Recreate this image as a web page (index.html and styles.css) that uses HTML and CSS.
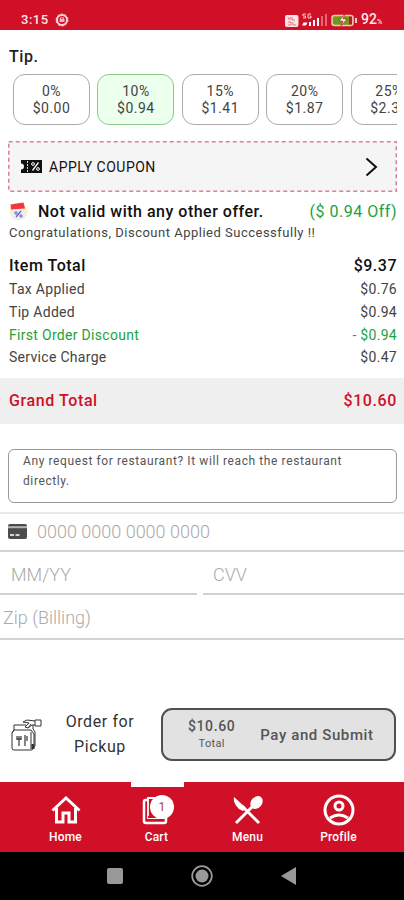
FILE: index.html
```html
<!DOCTYPE html>
<html lang="en">
<head>
<meta charset="utf-8">
<title>Checkout</title>
<link rel="stylesheet" href="styles.css">
</head>
<body>
<header class="status">
  <span class="clock">3:15</span>
  <svg class="status-app" width="14" height="14" viewBox="0 0 14 14"><circle cx="7" cy="7" r="5" fill="none" stroke="#fbd5d8" stroke-width="2"/><circle cx="7" cy="7" r="6" fill="none" stroke="#fbd5d8" stroke-width="1" stroke-dasharray="2 1.77"/><path d="M4.5 6h5v3h-5z" fill="#f6b5bb"/><path d="M5.5 6V4.8h3V6" fill="none" stroke="#f6b5bb"/></svg>
  <svg class="status-icons" width="75" height="16" viewBox="0 0 75 16">
    <rect x="0" y="3" width="13.500" height="12" rx="2" fill="#fce4e6"/>
    <path d="M3 5l1.500 3L6 5M7 5v3h3M3 10h3v3H3M8 10v3h3" fill="none" stroke="#df7480"/>
    <path d="M21 2h-3v2h2.500v2H18M26 2h-3v4h3V4h-1.500" fill="none" stroke="#f8c9cd"/>
    <path d="M17 13.500l1.500-3h4L21 13.500zM24 10h2v4h-2zM28 8h2v6h-2zM32 6h2v8h-2z" fill="#fff"/>
    <path d="M36 4h2v10h-2zM40 2h2v12h-2z" fill="#e46773"/>
    <rect x="47" y="3.500" width="21" height="10" rx="2.500" fill="#6f9b18" stroke="#f7c8c3" stroke-width="1.500"/>
    <path d="M70 6h2v5h-2z" fill="#f7c8c3"/><path d="M64 4.500h3v8h-3z" fill="#cf1027"/>
    <path d="M60 2l-6 7h4l-2 5 6-7h-4z" fill="#fff" stroke="#cf1027" stroke-width=".7"/>
  </svg>
  <span class="battery">92<small>%</small></span>
</header>

<main>
  <h2 class="tip-title">Tip.</h2>
  <div class="tips">
    <button class="tip">0%<br>$0.00</button>
    <button class="tip selected">10%<br>$0.94</button>
    <button class="tip">15%<br>$1.41</button>
    <button class="tip">20%<br>$1.87</button>
    <button class="tip">25%<br>$2.34</button>
  </div>

  <div class="coupon">
    <svg class="coupon-edge" width="389" height="51"><rect x=".75" y=".75" width="387.500" height="49.500" fill="#f5f5f5" stroke="#dd8093" stroke-width="1.500" stroke-dasharray="4 3"/></svg>
    <svg class="ticket" width="21" height="13" viewBox="0 0 21 13"><path d="M0 0h21v13H0V9.500a3 3 0 0 0 0-6z" fill="#111"/><path d="M6.500 1v11" stroke="#ddd" stroke-dasharray="2 1"/><path d="M11.500 10.500l6-8" stroke="#fff" stroke-width="1.300"/><circle cx="12" cy="4" r="1.400" fill="none" stroke="#fff"/><circle cx="17" cy="9" r="1.400" fill="none" stroke="#fff"/></svg>
    <span class="coupon-text">APPLY COUPON</span>
    <svg class="chevron" width="13" height="20" viewBox="0 0 13 20"><path d="M1.500 1.500l9.500 8.500-9.500 8.500" fill="none" stroke="#111" stroke-width="2"/></svg>
  </div>

  <div class="offer">
    <svg width="19" height="19" viewBox="0 0 19 19"><circle cx="9.500" cy="9.500" r="9" fill="#fff0ad"/><path d="M3 7h13v10H3z" fill="#eeeefb"/><path d="M1.500 2.500L14.500.5l1.500 6-14 1z" fill="#f0383e"/><path d="M7 15l5-6" stroke="#6864a4" stroke-width="1.200"/><circle cx="7" cy="11" r="1.200" fill="none" stroke="#6864a4"/><circle cx="12" cy="14" r="1.200" fill="none" stroke="#6864a4"/></svg>
    <span class="offer-name">Not valid with any other offer.</span>
    <span class="offer-off">($ 0.94 Off)</span>
  </div>
  <p class="congrats">Congratulations, Discount Applied Successfully !!</p>

  <div class="bill">
    <div class="line total"><span>Item Total</span><span>$9.37</span></div>
    <div class="line"><span>Tax Applied</span><span>$0.76</span></div>
    <div class="line"><span>Tip Added</span><span>$0.94</span></div>
    <div class="line discount"><span>First Order Discount</span><span>- $0.94</span></div>
    <div class="line"><span>Service Charge</span><span>$0.47</span></div>
  </div>
  <div class="grand"><span>Grand Total</span><span>$10.60</span></div>

  <div class="request">Any request for restaurant? It will reach the restaurant directly.</div>

  <div class="card-form">
    <div class="field number">
      <svg width="19" height="15" viewBox="0 0 19 15"><rect width="19" height="15" rx="2" fill="#4c4c4c"/><path d="M0 3.200h19" stroke="#b5b5b5" stroke-width="2"/><path d="M2 11h4M7.500 11h4" stroke="#fff" stroke-width="1.400"/></svg>
      <span class="number-text">0000 0000 0000 0000</span>
    </div>
    <div class="pair">
      <div class="field expiry">MM/YY</div>
      <div class="field cvv">CVV</div>
    </div>
    <div class="field zip">Zip (Billing)</div>
  </div>
</main>

<section class="checkout">
  <svg class="bag" width="31" height="33" viewBox="0 0 31 33"><g fill="none" stroke="#333" stroke-width="1"><path d="M3 7v5l-2 3v15q0 2 2 2h18l3-4V14l-2-3V7M3 7h12M3 12h17l3 4v15M1 15l2-3M20 14v17"/><path d="M24 2h6v6h-6zM24 3l-8-1-4 2 6 1-4 4 3 1 4-3 3 0M17 10l3-4"/></g><path d="M6 18v4M8 18v4M10 18v4M6 21h4M8 21v7M14 17v11M16 18v5" stroke="#444" stroke-width="1.300"/><path d="M20.500 26h2.500v5h-2.500z" fill="#333"/></svg>
  <p class="pickup">Order for<br>Pickup</p>
  <button class="pay">
    <span class="amount"><b>$10.60</b><small>Total</small></span>
    <span class="pay-label">Pay and Submit</span>
  </button>
</section>

<nav class="tabs">
  <a class="tab home">
    <svg width="32" height="32" viewBox="0 0 32 32"><path d="M2.500 16.500L16 4l13.500 12.500M6.500 14v14h6.500v-9h6v9h6.500V14" fill="none" stroke="#fff" stroke-width="3"/></svg><span>Home</span>
  </a>
  <a class="tab active">
    <svg width="32" height="32" viewBox="0 0 32 32"><path d="M7 6H4.500Q3 6 3 8v19q0 2 2 2h18q2 0 2-2v-4" fill="none" stroke="#fff" stroke-width="2.500"/><path d="M7 4h16v20H7z" fill="none" stroke="#fff" stroke-width="1.800"/><path d="M7 23h17" stroke="#cf1027" stroke-width="2"/></svg><i class="badge">1</i><span>Cart</span>
  </a>
  <a class="tab menu">
    <svg width="32" height="32" viewBox="0 0 32 32"><path d="M2 3c-1 5 2 9 5 12l4 2 3-3z" fill="#fff"/><path d="M10 12l17 17M4 29l18-18" fill="none" stroke="#fff" stroke-width="3"/><ellipse cx="24.500" cy="8.500" rx="5.500" ry="7" transform="rotate(42 24.500 8.500)" fill="#fff"/></svg><span>Menu</span>
  </a>
  <a class="tab profile">
    <svg width="32" height="32" viewBox="0 0 32 32"><circle cx="16" cy="16" r="14" fill="none" stroke="#fff" stroke-width="3"/><circle cx="16" cy="12" r="4" fill="none" stroke="#fff" stroke-width="3"/><path d="M7 24q9-6 18 0" fill="none" stroke="#fff" stroke-width="3"/></svg><span>Profile</span>
  </a>
</nav>
<footer class="system">
  <svg width="16" height="16"><rect width="16" height="16" rx="2" fill="#999"/></svg>
  <svg width="22" height="22"><circle cx="11" cy="11" r="9.800" fill="none" stroke="#999" stroke-width="1.800"/><circle cx="11" cy="11" r="6.500" fill="#999"/></svg>
  <svg width="15" height="18"><path d="M15 0v18L0 9z" fill="#999"/></svg>
</footer>
</body>
</html>
```
FILE: styles.css
```css
* { box-sizing: border-box; }
body { margin: 0; width: 404px; height: 900px; overflow: hidden; display: flex; flex-direction: column; background: #fff; color: #222; font-family: Roboto, sans-serif; }
h2, p { margin: 0; }
button { font-family: inherit; padding: 0; }
svg { flex: none; display: block; }
span { white-space: nowrap; }

.status { height: 30px; background: #cf1027; color: #ffe6e8; display: flex; align-items: center; padding: 10px 21px 0; font-size: 13px; font-weight: 500; line-height: 20px; }
.clock { width: 27px; letter-spacing: .5px; }
.status-app { margin-left: 7px; }
.status-icons { margin-left: 216px; }
.battery { margin-left: 1px; font-size: 14px; }
.battery small { font-size: 7px; }

main { height: 670px; }
.tip-title { padding-left: 9px; margin-top: 17px; font-size: 16px; line-height: 20px; font-weight: 500; letter-spacing: .6px; }
.tips { margin: 7px 7px 0 13px; height: 51px; display: flex; gap: 7.400px; overflow: hidden; }
.tip { flex: none; width: 77px; height: 51px; border: 1px solid #aaa; border-radius: 12px; background: #fff; color: #444; font-size: 14px; line-height: 17px; letter-spacing: .5px; }
.tip.selected { background: #edffed; border-color: #89c98c; }

.coupon { position: relative; margin: 16px 7px 0 8px; height: 51px; display: flex; align-items: center; padding: 0 19px 0 13px; }
.coupon-edge { position: absolute; left: 0; top: 0; }
.ticket, .coupon-text, .chevron { position: relative; }
.coupon-text { margin-left: 7px; font-size: 14px; letter-spacing: .5px; font-weight: 400; color: #111; }
.chevron { margin-left: auto; }

.offer { height: 22px; margin-top: 8px; padding: 0 7px 0 9px; display: flex; align-items: center; font-size: 16px; }
.offer-name { margin-left: 10px; font-weight: 500; letter-spacing: .5px; color: #111; }
.offer-off { margin-left: auto; color: #22a33a; letter-spacing: .5px; }
.congrats { padding-left: 9px; height: 22px; line-height: 22px; font-size: 13px; letter-spacing: .5px; color: #444; white-space: nowrap; }

.bill { margin-top: 9px; padding: 0 7px 0 9px; }
.line { height: 22.700px; display: flex; justify-content: space-between; align-items: center; font-size: 14px; letter-spacing: .3px; color: #444; }
.line.total { height: 25px; font-size: 16px; font-weight: 500; letter-spacing: .5px; color: #111; }
.line.discount { color: #22a33a; }
.grand { margin-top: 9px; height: 46px; padding: 0 7px 0 9px; background: #efefef; color: #cf1027; display: flex; justify-content: space-between; align-items: center; font-size: 16px; font-weight: 500; letter-spacing: .6px; }

.request { margin: 25px 7px 0 8px; height: 54px; border: 1px solid #999; border-radius: 6px; padding: 1px 30px 0 14px; font-size: 12px; line-height: 20.500px; letter-spacing: .6px; color: #555; }

.card-form { margin-top: 9px; border-top: 2px solid #e8e8e8; color: #aaa; font-size: 18px; font-weight: 300; }
.field { display: flex; align-items: center; border-bottom: 2px solid #d2d2d2; }
.number { height: 38px; padding-left: 8px; }
.number-text { margin-left: 10px; }
.pair { display: flex; gap: 6px; height: 43px; }
.expiry { width: 197px; padding: 4px 0 0 11px; }
.cvv { flex: 1; padding: 4px 0 0 10px; }
.zip { height: 45px; padding: 3px 0 0 3px; }

.checkout { height: 82px; display: flex; align-items: flex-start; padding: 8px 8px 0 11px; }
.bag { margin-top: 10px; }
.pickup { width: 116px; text-align: center; font-size: 16px; line-height: 25px; letter-spacing: .6px; margin-top: 1px; color: #333; }
.pay { margin-left: 3px; width: 235px; height: 53px; border: 2px solid #505050; border-radius: 11px; background: #e2e2e2; color: #555; display: flex; align-items: center; padding-left: 25px; }
.amount { display: flex; flex-direction: column; align-items: center; }
.amount b { font-size: 14px; line-height: 18px; font-weight: 500; letter-spacing: .6px; }
.amount small { font-size: 11px; line-height: 18px; letter-spacing: .3px; }
.pay-label { margin-left: 25px; font-size: 15px; font-weight: 500; letter-spacing: .6px; }

.tabs { height: 70px; background: #cf1027; color: #fff; display: grid; grid-template-columns: repeat(4, 91px); padding-left: 20px; }
.tab { position: relative; display: flex; flex-direction: column; align-items: center; padding-top: 12px; font-size: 12px; font-weight: 500; line-height: 14px; letter-spacing: .2px; }
.tab span { margin-top: 4px; }
.active::before { content: ""; position: absolute; top: 0; left: 20px; width: 53px; height: 5px; background: #fff; }
.badge { position: absolute; left: 39px; top: 13px; width: 24px; height: 24px; border-radius: 50%; background: #fff; color: #b34; font-style: normal; font-size: 12px; font-weight: 400; line-height: 24px; text-align: center; }
.system { height: 48px; background: #000; display: flex; align-items: center; padding-left: 107px; }
.system svg + svg { margin-left: 68px; }
```
